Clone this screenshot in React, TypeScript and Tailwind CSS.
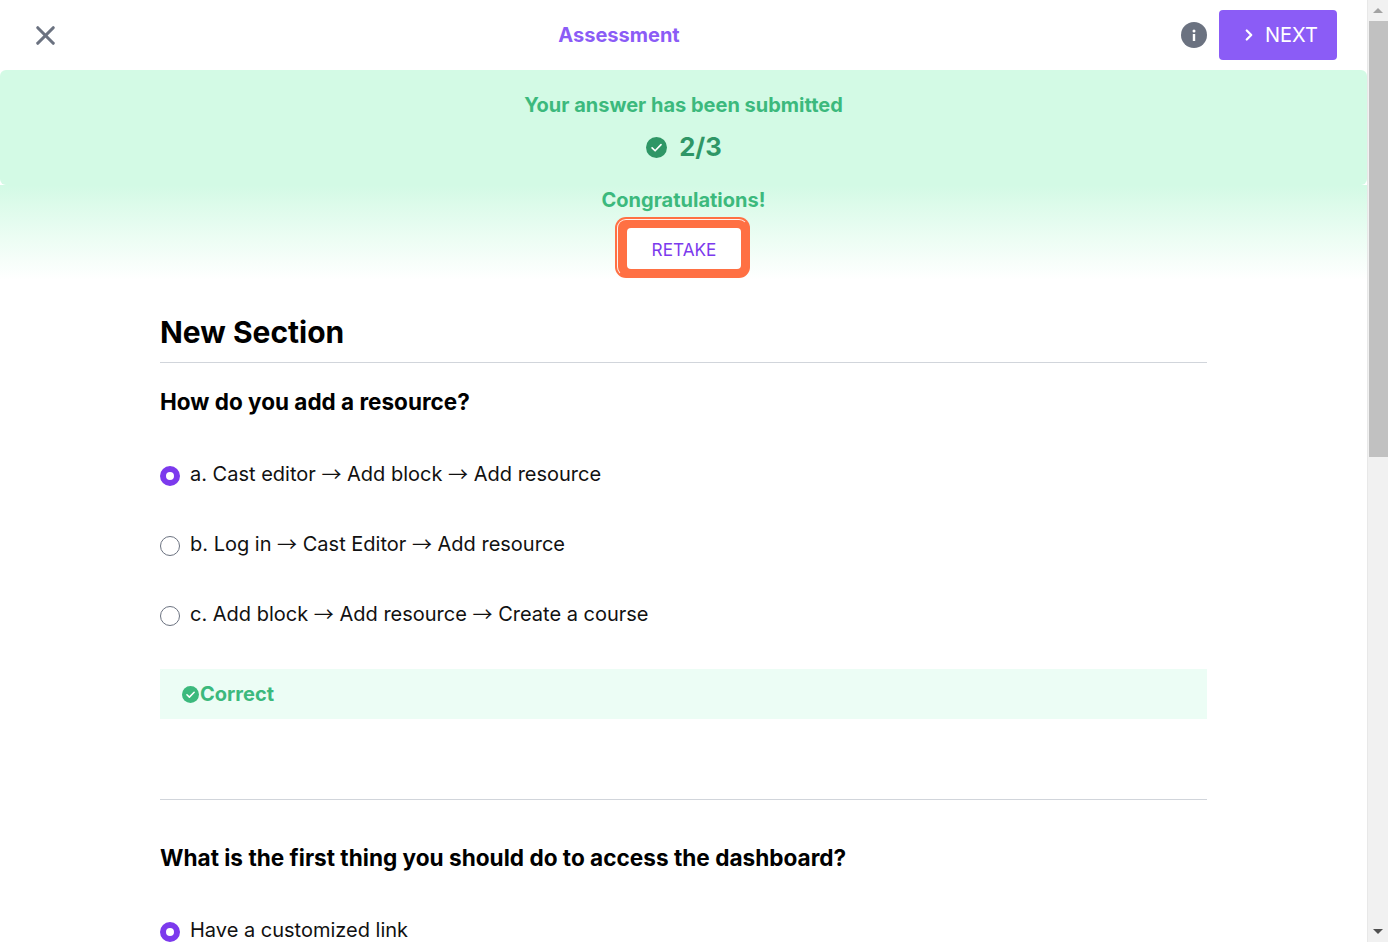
import { X, ChevronRight } from "lucide-react";

function CheckCircle({ className, stroke = 1.6 }: { className: string; stroke?: number }) {
  return (
    <svg viewBox="0 0 20 20" className={className} fill="none">
      <circle cx="10" cy="10" r="10" fill="currentColor" />
      <path d="M5.8 10.3l2.9 2.8 5.6-5.8" stroke="white" strokeWidth={stroke} strokeLinecap="round" strokeLinejoin="round" />
    </svg>
  );
}

function InfoIcon() {
  return (
    <svg viewBox="0 0 26 26" className="h-[26px] w-[26px] text-[#6b7280]">
      <circle cx="13" cy="13" r="13" fill="currentColor" />
      <circle cx="13" cy="9" r="1.5" fill="white" />
      <rect x="11.8" y="12" width="2.4" height="7" fill="white" />
    </svg>
  );
}

// the arrows come from a wider fallback font in the reference
function Label({ text }: { text: string }) {
  const parts = text.split("→");
  return (
    <span className="text-[20px] leading-[30px] text-[#111]">
      {parts.map((part, i) => (
        <span key={i}>
          {i > 0 && <span className="relative top-[1px] font-['Noto_Sans_CJK_SC',sans-serif] leading-none">→</span>}
          {part}
        </span>
      ))}
    </span>
  );
}

function Radio({ checked, label }: { checked?: boolean; label: string }) {
  return (
    <div className="flex h-[30px] items-center gap-[10px]">
      {checked ? (
        <span className="mt-[3px] box-border h-5 w-5 shrink-0 rounded-full border-[6px] border-[#7c3aed] bg-white" />
      ) : (
        <span className="mt-[3px] box-border h-5 w-5 shrink-0 rounded-full border border-[#6b7280] bg-white" />
      )}
      <Label text={label} />
    </div>
  );
}

function Scrollbar() {
  return (
    <div className="flex h-full w-[21px] shrink-0 flex-col items-end border-l border-[#e8e8e8] bg-[#f1f1f1]">
      <div className="flex h-[21px] w-full items-center justify-center">
        <span className="h-0 w-0 border-x-[5px] border-b-[5px] border-x-transparent border-b-[#a3a3a3]" />
      </div>
      <div className="h-[436px] w-[19px] bg-[#c1c1c1]" />
      <div className="flex-1" />
      <div className="flex h-[21px] w-full items-center justify-center">
        <span className="h-0 w-0 border-x-[5px] border-t-[5px] border-x-transparent border-t-[#505050]" />
      </div>
    </div>
  );
}

export default function App() {
  return (
    <div className="flex h-[942px] w-[1388px] overflow-hidden bg-white font-['Inter',sans-serif]">
      <div className="min-w-0 flex-1">
        {/* Header */}
        <header className="flex h-[70px] items-center justify-between pl-[30px] pr-[30px]">
          <X className="-mr-1 h-[31px] w-[31px] text-[#6b7280]" strokeWidth={2.4} />
          <h1 className="text-[20px] font-bold text-[#8b5cf6]">Assessment</h1>
          <div className="flex items-center gap-3">
            <InfoIcon />
            <button className="flex h-[50px] w-[118px] items-center gap-[7px] rounded-[4px] bg-[#8b5cf6] pl-[21px] text-[20px] text-white">
              <ChevronRight className="h-[18px] w-[18px]" strokeWidth={3} />
              NEXT
            </button>
          </div>
        </header>

        {/* Result banner */}
        <div className="flex h-[115px] flex-col items-center rounded-[6px] bg-[#d3fae5] pt-5">
          <p className="text-[20px] leading-[30px] font-bold text-[#3cb97d]">Your answer has been submitted</p>
          <div className="mt-[9px] ml-[1px] flex h-9 items-center gap-3">
            <CheckCircle className="h-[21px] w-[21px] text-[#2f9666]" />
            <span className="text-[25.6px] leading-9 font-bold text-[#2f9666]">2/3</span>
          </div>
        </div>
        <div className="flex h-[95px] flex-col items-center bg-gradient-to-b from-[#d3fae5] to-white">
          <p className="text-[20px] leading-[30px] font-bold text-[#3cb97d]">Congratulations!</p>
          <div className="mt-[2px] mr-[2px] rounded-[11px] bg-[#ff7043] p-[2px]">
            <div className="rounded-[9px] border border-white/90 border-r-[#ff7043] border-b-[#ff7043] pt-[8px] pr-[6px] pb-[6px] pl-[9px]">
              <button className="flex h-[41px] w-[114px] items-center justify-center rounded-[4px] bg-white pt-[2px] text-[17.2px] text-[#7c3aed]">
                RETAKE
              </button>
            </div>
          </div>
        </div>

        {/* Questions */}
        <main className="mx-[160px] mt-[31px]">
          <h2 className="border-b border-[#d1d5db] pb-2 text-[30px] leading-[43px] font-bold text-black">New Section</h2>
          <h3 className="mt-6 text-[22.5px] leading-[30px] font-bold text-black">How do you add a resource?</h3>
          <div className="mt-[42px] flex flex-col gap-10">
            <Radio checked label="a. Cast editor → Add block → Add resource" />
            <Radio label="b. Log in → Cast Editor → Add resource" />
            <Radio label="c. Add block → Add resource → Create a course" />
          </div>
          <div className="mt-10 flex h-[50px] items-center bg-[#ecfdf5] px-5 text-[20px] font-bold text-[#3cb97d]">
            <CheckCircle className="mr-[1px] ml-[2px] h-[17px] w-[17px]" stroke={1.8} />
            Correct
          </div>
          <div className="mt-20 border-t border-[#d1d5db]" />
          <h3 className="mt-[43px] text-[22.6px] leading-[30px] font-bold text-black">What is the first thing you should do to access the dashboard?</h3>
          <div className="mt-[42px]">
            <Radio checked label="Have a customized link" />
          </div>
        </main>
      </div>
      <Scrollbar />
    </div>
  );
}
